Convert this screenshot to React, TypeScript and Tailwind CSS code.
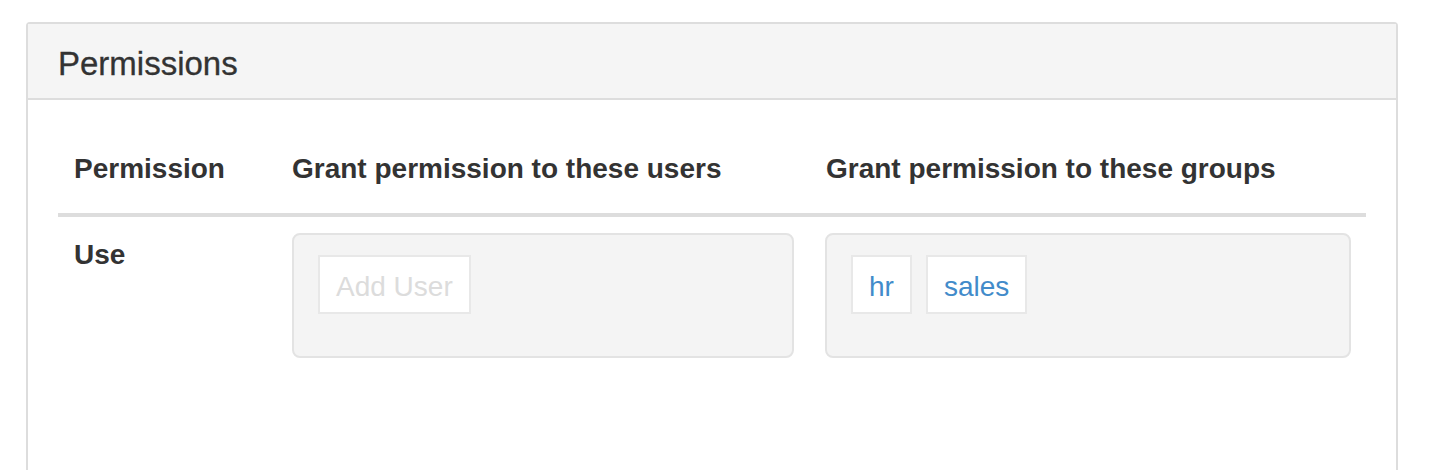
import React from "react";

export default function App() {
  return (
    <div className="w-[1432px] h-[470px] overflow-hidden bg-white pl-[26px] pt-[22px] text-[#333]" style={{ fontFamily: '"Liberation Sans", Arial, sans-serif' }}>
      <div className="w-[1372px] h-[600px] border-2 border-[#dddddd] rounded-t-[4px]">
        <div className="bg-[#f5f5f5] border-b-2 border-[#dddddd] px-[30px] pt-[22px] pb-[17px]">
          <h3 className="text-[33px] leading-[35px] text-[#333] [-webkit-text-stroke:0.3px_#333]">Permissions</h3>
        </div>
        <div className="p-[30px]">
          <div className="grid grid-cols-[218px_534px_556px] border-b-4 border-[#dddddd] font-bold text-[28px] leading-[40px]">
            <div className="px-[16px] pt-[19px] pb-[24px]">Permission</div>
            <div className="px-[16px] pt-[19px] pb-[24px]">Grant permission to these users</div>
            <div className="px-[16px] pt-[19px] pb-[24px]">Grant permission to these groups</div>
          </div>
          <div className="grid grid-cols-[218px_534px_556px] text-[28px] leading-[40px]">
            <div className="px-[16px] pt-[18px] font-bold">Use</div>
            <div className="px-[16px] pt-[16px]">
              <div className="h-[125px] border-2 border-[#e3e3e3] bg-[#f4f4f4] rounded-[8px] pl-[24px] pt-[20px] flex items-start gap-[14px]">
                <div className="h-[59px] flex items-center bg-white border-2 border-[#e8e8e8] px-[16px] pt-[4px] text-[#dcdcdc]">Add User</div>
              </div>
            </div>
            <div className="px-[15px] pt-[16px]">
              <div className="h-[125px] border-2 border-[#e3e3e3] bg-[#f4f4f4] rounded-[8px] pl-[24px] pt-[20px] flex items-start gap-[14px]">
                <div className="h-[59px] flex items-center bg-white border-2 border-[#e8e8e8] px-[16px] pt-[4px] text-[#428bca]">hr</div>
                <div className="h-[59px] flex items-center bg-white border-2 border-[#e8e8e8] px-[16px] pt-[4px] text-[#428bca]">sales</div>
              </div>
            </div>
          </div>
        </div>
      </div>
    </div>
  );
}
